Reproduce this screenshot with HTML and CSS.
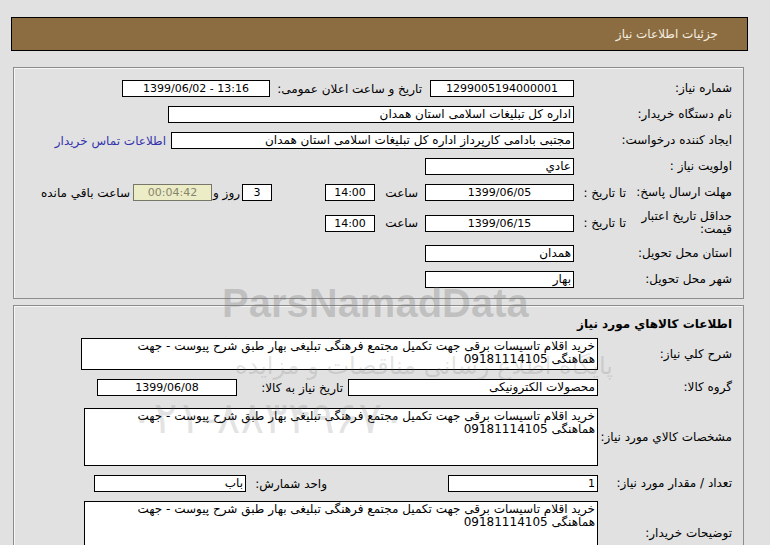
FILE: index.html
```html
<!DOCTYPE html>
<html lang="fa" dir="rtl">
<head>
    <meta charset="UTF-8">
    <meta name="viewport" content="width=device-width, initial-scale=1.0">
    <title>جزئیات اطلاعات نیاز</title>
    <link rel="stylesheet" href="styles.css">
</head>
<body>
    <div class="page">
        <div class="title-bar">جزئیات اطلاعات نیاز</div>

        <div class="panel info">
            <div class="rows">
                <div class="row">
                    <div class="label">شماره نیاز:</div>
                    <div class="field w144 center num">1299005194000001</div>
                    <div class="inline-label pub">تاریخ و ساعت اعلان عمومی:</div>
                    <div class="field w148 center ltr num">1399/06/02 - 13:16</div>
                </div>
                <div class="row">
                    <div class="label">نام دستگاه خریدار:</div>
                    <div class="field w406">اداره کل تبلیغات اسلامی استان همدان</div>
                </div>
                <div class="row">
                    <div class="label">ایجاد کننده درخواست:</div>
                    <div class="field w403">مجتبی بادامی کارپرداز اداره کل تبلیغات اسلامی استان همدان</div>
                    <a class="contact" href="#">اطلاعات تماس خریدار</a>
                </div>
                <div class="row">
                    <div class="label">اولویت نیاز :</div>
                    <div class="field w149">عادي</div>
                </div>
                <div class="row">
                    <div class="label short">مهلت ارسال پاسخ:</div>
                    <div class="sub-label">تا تاریخ :</div>
                    <div class="field w149 center num">1399/06/05</div>
                    <div class="time-label">ساعت</div>
                    <div class="field w50 center num">14:00</div>
                    <div class="field w30 center days num">3</div>
                    <div class="word">روز و</div>
                    <div class="field remain center num">00:04:42</div>
                    <div class="word remain-text">ساعت باقي مانده</div>
                </div>
                <div class="row tall">
                    <div class="label short">حداقل تاریخ اعتبار<br>قیمت:</div>
                    <div class="sub-label">تا تاریخ :</div>
                    <div class="field w149 center num">1399/06/15</div>
                    <div class="time-label">ساعت</div>
                    <div class="field w50 center num">14:00</div>
                </div>
                <div class="row">
                    <div class="label">استان محل تحویل:</div>
                    <div class="field w149">همدان</div>
                </div>
                <div class="row">
                    <div class="label">شهر محل تحویل:</div>
                    <div class="field w149">بهار</div>
                </div>
            </div>
        </div>

        <div class="panel goods">
            <div class="section-title">اطلاعات کالاهاي مورد نیاز</div>
            <div class="rows">
                <div class="row">
                    <div class="label wide">شرح کلي نياز:</div>
                    <div class="box w517 h32">خرید اقلام تاسیسات برقی جهت تکمیل مجتمع فرهنگی تبلیغی بهار طبق شرح پیوست - جهت<br>هماهنگی 09181114105</div>
                </div>
                <div class="row">
                    <div class="label wide">گروه کالا:</div>
                    <div class="field w250">محصولات الکترونیکی</div>
                    <div class="inline-label need-date">تاریخ نیاز به کالا:</div>
                    <div class="field w140 center num">1399/06/08</div>
                </div>
                <div class="row spaced">
                    <div class="label wide">مشخصات کالاي مورد نیاز:</div>
                    <div class="box w514 h58">خرید اقلام تاسیسات برقی جهت تکمیل مجتمع فرهنگی تبلیغی بهار طبق شرح پیوست - جهت<br>هماهنگی 09181114105</div>
                </div>
                <div class="row">
                    <div class="label wide">تعداد / مقدار مورد نیاز:</div>
                    <div class="field w150 num">1</div>
                    <div class="inline-label unit">واحد شمارش:</div>
                    <div class="field w152">باب</div>
                </div>
                <div class="row">
                    <div class="label wide">توضیحات خریدار:</div>
                    <div class="box w514 h64">خرید اقلام تاسیسات برقی جهت تکمیل مجتمع فرهنگی تبلیغی بهار طبق شرح پیوست - جهت<br>هماهنگی 09181114105</div>
                </div>
            </div>
        </div>

        <!-- watermark of the source site, drawn over the form -->
        <div class="watermark">
            <div class="wm-brand">ParsNamadData</div>
            <div class="wm-slogan">پایگاه اطلاع رسانی مناقصات و مزایده</div>
            <div class="wm-phone">۰۲۱-۸۸۳۴۹۶۷۰</div>
        </div>
    </div>
</body>
</html>
```

FILE: styles.css
```css
body {
    margin: 0;
    background-color: #e1e1e1;
    font-family: 'DejaVu Sans', Tahoma, sans-serif;
    font-size: 12px;
    color: #000;
    direction: rtl;
}
.page {
    position: relative;
    height: 545px;
    padding-top: 17px;
    box-sizing: border-box;
    overflow: hidden;
}
.title-bar {
    margin: 0 22px 0 11px;
    height: 34px;
    box-sizing: border-box;
    border: 1px solid #000;
    background-color: #8c6d42;
    color: #f4ede0;
    font-size: 12px;
    line-height: 32px;
    padding-right: 29px;
}
.panel {
    margin: 16px 26px 0 13px;
    border: 1px solid #8c8c8c;
    box-shadow: inset 1px 1px 0 #f6f6f6;
    padding: 12px 11px 10px 0;
}
.panel.goods {
    margin-top: 6px;
    padding-top: 11px;
    height: 300px;
}
.section-title {
    font-weight: bold;
    font-size: 12px;
    line-height: 14px;
    margin-bottom: 7px;
}
.rows {
    display: flex;
    flex-direction: column;
    gap: 9px;
}
.row {
    display: flex;
    align-items: center;
    min-height: 17px;
}
.row.tall {
    min-height: 24px;
}
.row.spaced {
    margin-top: 3px;
}
.label {
    flex: none;
    width: 158px;
    line-height: 13px;
}
.label.short {
    width: 100px;
}
.label.wide {
    width: 134px;
}
.sub-label {
    flex: none;
    width: 58px;
    box-sizing: border-box;
    padding-right: 6px;
}
.inline-label {
    flex: none;
    box-sizing: border-box;
}
.inline-label.pub {
    width: 160px;
    padding-right: 8px;
}
.inline-label.need-date {
    width: 111px;
    padding-right: 5px;
}
.inline-label.unit {
    width: 81px;
    margin-right: 121px;
}
.time-label {
    flex: none;
    width: 50px;
    box-sizing: border-box;
    padding-right: 7px;
}
.word {
    flex: none;
    width: 30px;
    box-sizing: border-box;
    padding-right: 2px;
}
.remain-text {
    width: auto;
    padding-right: 3px;
}
.field {
    flex: none;
    box-sizing: border-box;
    height: 17px;
    border: 1px solid #000;
    background-color: #fff;
    padding: 0 2px;
    line-height: 15px;
    white-space: nowrap;
    overflow: hidden;
}
.field.num {
    font-size: 11px;
}
.field.center {
    text-align: center;
}
.field.ltr {
    direction: ltr;
}
.field.days {
    margin-right: 53px;
}
.field.remain {
    width: 79px;
    background-color: #ececc6;
    border-color: #77776a;
    color: #85856f;
}
.w30 { width: 30px; }
.w50 { width: 50px; }
.w140 { width: 140px; }
.w144 { width: 144px; }
.w148 { width: 148px; }
.w149 { width: 149px; }
.w150 { width: 150px; }
.w152 { width: 152px; }
.w250 { width: 250px; }
.w403 { width: 403px; }
.w406 { width: 406px; }
.w514 { width: 514px; }
.w517 { width: 517px; }
.h32 { height: 32px; }
.h58 { height: 58px; }
.h64 { height: 64px; }
.box {
    flex: none;
    box-sizing: border-box;
    border: 1px solid #000;
    background-color: #fff;
    padding: 1px 2px;
    line-height: 13px;
    white-space: nowrap;
    overflow: hidden;
}
.contact {
    margin-right: 5px;
    color: #3434ad;
    text-decoration: none;
}
.watermark {
    position: absolute;
    left: 0;
    top: 0;
    width: 770px;
    height: 545px;
    pointer-events: none;
    color: rgba(110, 110, 110, 0.28);
}
.wm-brand {
    position: absolute;
    left: 222px;
    top: 281px;
    direction: ltr;
    font-family: 'Liberation Sans', Arial, sans-serif;
    font-weight: bold;
    font-size: 40px;
}
.wm-slogan {
    position: absolute;
    left: 235px;
    top: 352px;
    font-size: 24px;
    color: rgba(110, 110, 110, 0.2);
}
.wm-phone {
    position: absolute;
    left: 130px;
    top: 392px;
    font-size: 44px;
    color: rgba(110, 110, 110, 0.2);
}
```
